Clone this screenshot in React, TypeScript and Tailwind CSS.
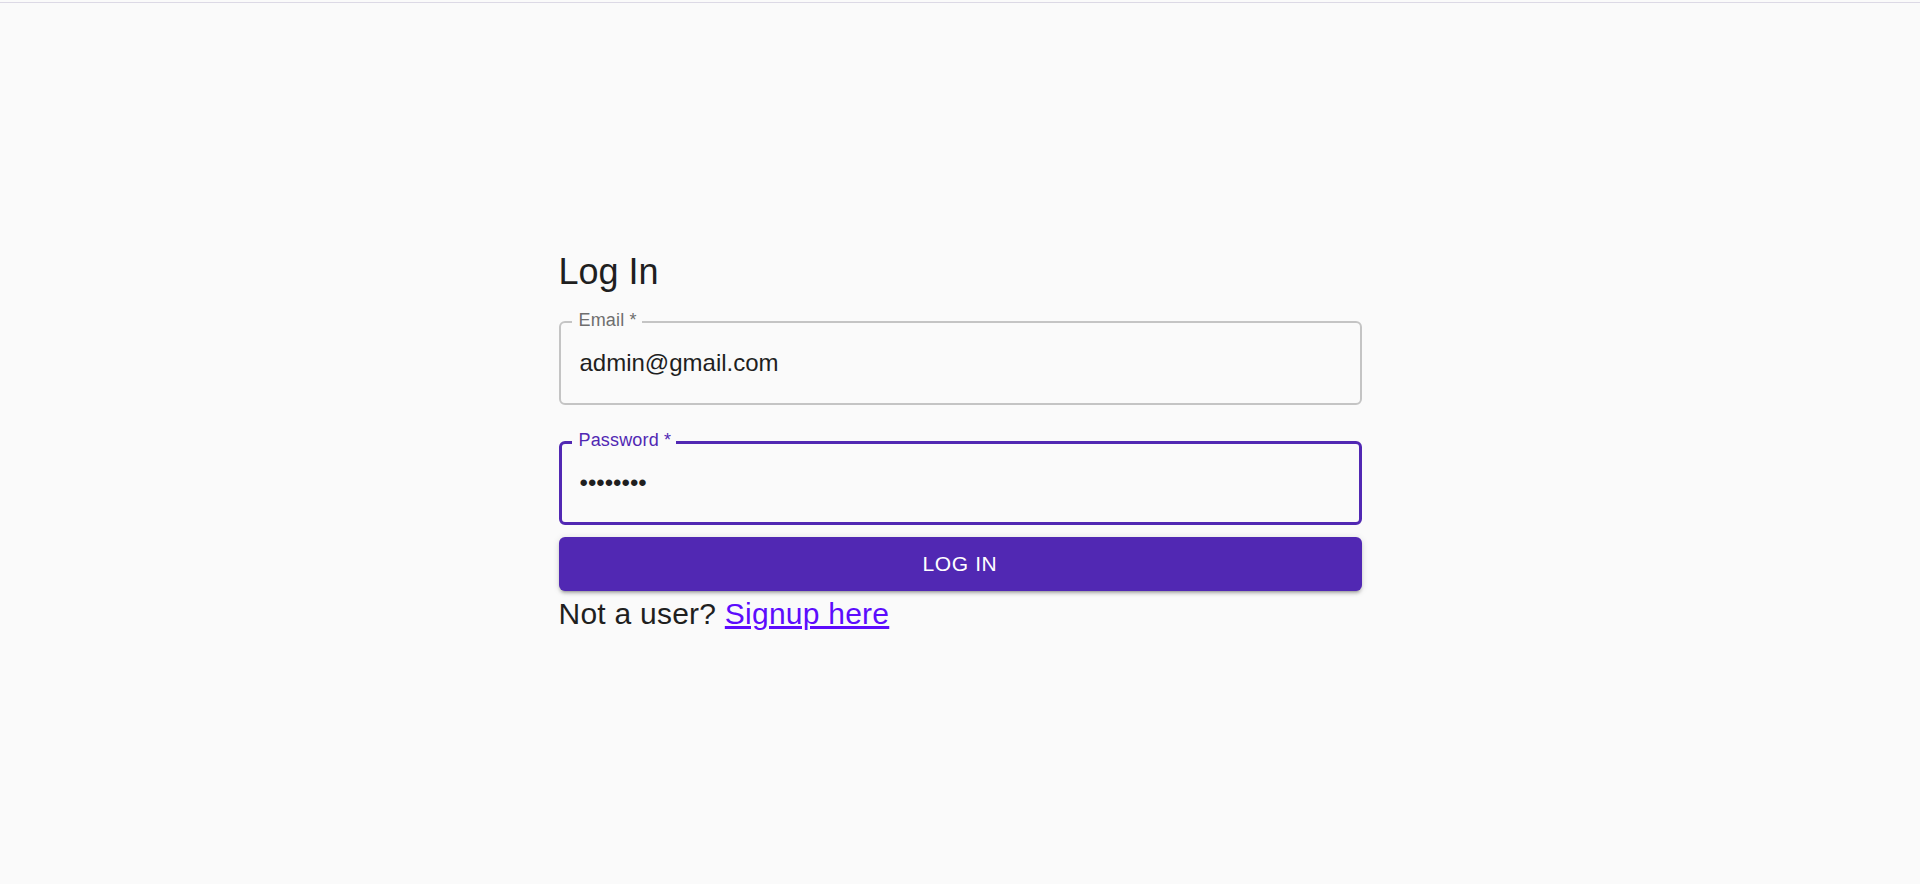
import React from "react";

function Field({
  label,
  value,
  type,
  focused,
}: {
  label: string;
  value: string;
  type: string;
  focused?: boolean;
}) {
  return (
    <div className="relative">
      <div
        className={
          focused
            ? "h-[84px] rounded-[6px] border-[3px] border-[#5128b3] flex items-center pl-[18px] pr-[18px]"
            : "h-[84px] rounded-[6px] border-2 border-[#c4c4c4] flex items-center pl-[19px] pr-[19px]"
        }
      >
        <input
          readOnly
          type={type}
          value={value}
          className="w-full bg-transparent outline-none text-[24px] text-[#1f1f1f] font-['Liberation_Sans',Arial,sans-serif]"
        />
      </div>
      <label
        className={
          focused
            ? "absolute top-[-9.5px] left-[13px] pl-[7px] pr-[5px] bg-[#fafafa] text-[18px] leading-[18px] tracking-[0.17px] text-[#5128b3]"
            : "absolute top-[-9.5px] left-[13px] pl-[7px] pr-[5px] bg-[#fafafa] text-[18px] leading-[18px] tracking-[0.17px] text-[#6e6e6e]"
        }
      >
        {label}
      </label>
    </div>
  );
}

export default function App() {
  return (
    <div className="min-h-screen bg-[#fafafa] font-['Liberation_Sans',Arial,sans-serif] text-[#1f1f1f]">
      <div className="pt-[2px]">
        <div className="h-px bg-[#dcd9e5]" />
      </div>
      <div className="mx-auto w-[803px] pt-[245px]">
        <h1 className="text-[36px] leading-[48px] text-[#1f1f1f]">Log In</h1>
        <div className="mt-[24.5px]">
          <Field label="Email *" value="admin@gmail.com" type="text" />
        </div>
        <div className="mt-[36px]">
          <Field label="Password *" value="password" type="password" focused />
        </div>
        <button className="mt-[12.5px] w-full h-[54px] rounded-[6px] bg-[#5128b3] text-white text-[21px] tracking-[0.6px] uppercase shadow-[0_4px_2px_-3px_rgba(0,0,0,0.2),0_3px_3px_0_rgba(0,0,0,0.14),0_1px_7px_0_rgba(0,0,0,0.12)]">
          Log In
        </button>
        <p className="text-[30px] leading-[45px] tracking-[0.24px] text-[#1f1f1f]">
          Not a user?{" "}
          <a href="#" className="underline text-[#5c0cfd]">
            Signup here
          </a>
        </p>
      </div>
    </div>
  );
}
